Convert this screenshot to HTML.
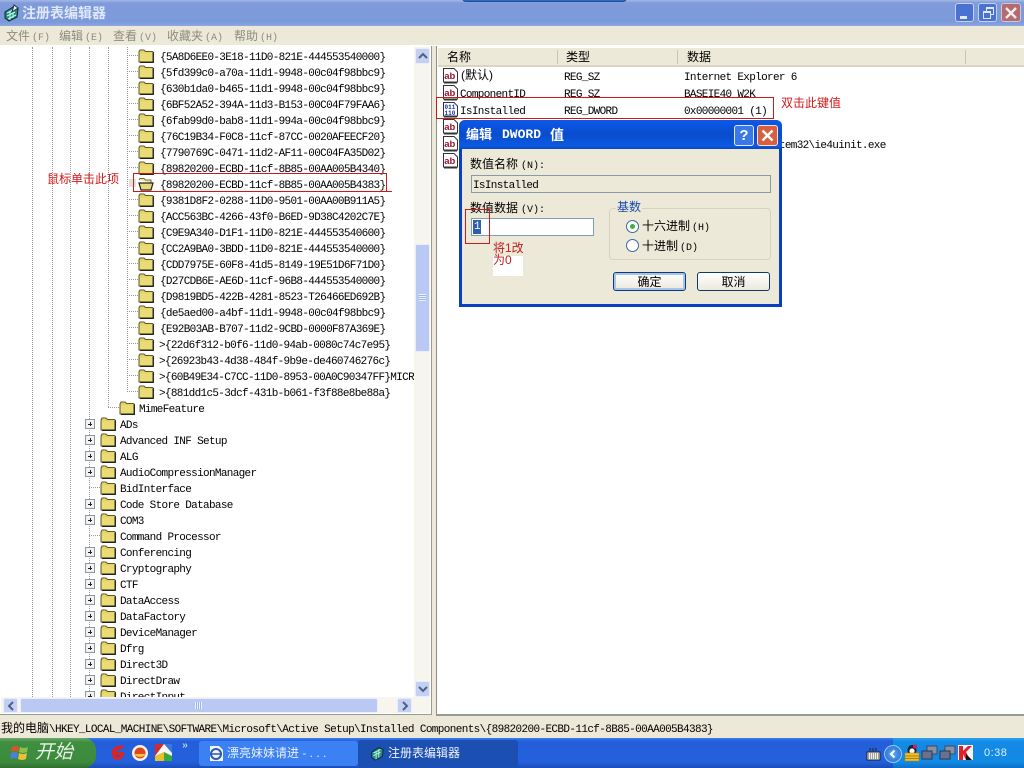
<!DOCTYPE html>
<html><head><meta charset="utf-8"><style>
html,body{margin:0;padding:0;background:#ece9d8}
#r{position:relative;width:1024px;height:768px;overflow:hidden;background:#ece9d8;font:11px "Liberation Mono","WenQuanYi Zen Hei",monospace;color:#000}
.a{position:absolute}
.t{position:absolute;white-space:pre;line-height:16px;height:16px;letter-spacing:-.67px;margin-top:2px}
.c{font-family:"Liberation Sans","WenQuanYi Zen Hei","Noto Sans CJK SC",sans-serif;font-size:12px;letter-spacing:0;white-space:pre;position:absolute;line-height:16px}
.s{font:10px "Liberation Mono",monospace;margin-left:2px}
.m{color:#8d8b80;margin-top:1px}
.red{color:#d01818}
svg{position:absolute;overflow:visible}
.v{position:absolute;width:0;border-left:1px dotted #999}
.h{position:absolute;height:0;border-top:1px dotted #999}
.p{position:absolute;left:85px;width:8px;height:8px;border:1px solid #8a9aa8;background:#f4f4ee}
.p:before{content:"";position:absolute;left:2px;top:3.5px;width:4px;height:1px;background:#222}
.p:after{content:"";position:absolute;left:3.5px;top:2px;width:1px;height:4px;background:#222}
</style></head><body><div id="r">
<svg width="0" height="0" style="position:absolute"><defs>
<symbol id="f" viewBox="0 0 16 14"><path d="M1 3 L2 1 H6 L7.5 2.5 H14.5 L15.5 3.5 V13 H1 Z" fill="#e2d568" stroke="#5c5a30" stroke-width="1"/><path d="M2 4.5 H14.5 V12 H2 Z" fill="#e9dc74"/><path d="M15.2 3.5 V13.3 H2" stroke="#222" fill="none" stroke-width="1.3"/></symbol>
<symbol id="ab" viewBox="0 0 16 18"><path d="M1.5 .5 H12 L15.5 4 V14 H1.5 Z" fill="#fff" stroke="#333"/><path d="M2 15 H15" stroke="#333"/><text x="2.2" y="11" font-family="Liberation Sans" font-weight="700" font-size="9.5" fill="#a01030">ab</text></symbol>
<symbol id="bin" viewBox="0 0 16 18"><path d="M1.5 .5 H12 L15.5 4 V14 H1.5 Z" fill="#fff" stroke="#333"/><path d="M2 15 H15" stroke="#333"/><text x="2.5" y="7" font-family="Liberation Mono" font-weight="700" font-size="6" fill="#1030b0">011</text><text x="2.5" y="13" font-family="Liberation Mono" font-weight="700" font-size="6" fill="#1030b0">110</text></symbol>
</defs></svg>

<!-- title bar -->
<div class="a" style="left:0;top:0;width:1024px;height:26px;background:linear-gradient(#a5b8e6 0,#7f9bdb 3px,#7c99da 22px,#8ea8e2 26px)"></div>
<div class="a" style="left:462px;top:-8px;width:163px;height:8px;background:#2f6cc0;border-radius:4px;border:1px solid #1b4f9a"></div>
<svg style="left:2px;top:4px" width="18" height="18" viewBox="0 0 18 18"><path d="M3 8 L11 3 L16 5 L15 13 L7 17 L3 14 Z" fill="#2a8a7a" stroke="#123" stroke-width="1"/><path d="M5 9 L13 5 M5 12 L13 8 M6 15 L14 11 M8 7 V16 M11 5 V14" stroke="#bfe" stroke-width="1"/><path d="M12 1 L16 4 L10 8 Z" fill="#e8f0ff" stroke="#234"/></svg>
<div class="c" style="left:22px;top:4px;color:#dfe8f8;font-weight:700;font-size:14px;line-height:18px">注册表编辑器</div>
<div class="a" style="left:955px;top:3px;width:19px;height:19px;background:#4a72d0;border:1px solid #c4d2ee;border-radius:3px;box-sizing:border-box"><div class="a" style="left:4px;top:12px;width:7px;height:3px;background:#dfe8f8"></div></div>
<div class="a" style="left:978px;top:3px;width:19px;height:19px;background:#4a72d0;border:1px solid #c4d2ee;border-radius:3px;box-sizing:border-box"><div class="a" style="left:7px;top:3px;width:6px;height:5px;border:1px solid #dfe8f8;border-top-width:2px"></div><div class="a" style="left:4px;top:7px;width:6px;height:5px;border:1px solid #dfe8f8;border-top-width:2px;background:#4a72d0"></div></div>
<div class="a" style="left:1001px;top:3px;width:20px;height:19px;background:#b56a72;border:1px solid #d8c4cc;border-radius:3px;box-sizing:border-box"><svg style="left:3px;top:3px" width="12" height="12"><path d="M1 1 L11 11 M11 1 L1 11" stroke="#f4eeee" stroke-width="2.4"/></svg></div>

<!-- menu -->
<div class="c m" style="left:6px;top:27px">文件<span class="s">(F)</span></div>
<div class="c m" style="left:59px;top:27px">编辑<span class="s">(E)</span></div>
<div class="c m" style="left:113px;top:27px">查看<span class="s">(V)</span></div>
<div class="c m" style="left:167px;top:27px">收藏夹<span class="s">(A)</span></div>
<div class="c m" style="left:234px;top:27px">帮助<span class="s">(H)</span></div>
<div class="a" style="left:0;top:45px;width:1024px;height:1px;background:#fff"></div>

<!-- tree panel -->
<div class="a" style="left:0;top:46px;width:432px;height:669px;background:#fff;border-right:1px solid #9a9a90;border-bottom:1px solid #9a9a90;box-sizing:border-box"></div>
<div class="a" id="tree" style="left:0;top:47px;width:414px;height:650px;overflow:hidden">
<div style="position:absolute;left:0;top:-47px;width:414px;height:770px">
<div class="v" style="left:32px;top:47px;height:650px"></div>
<div class="v" style="left:52px;top:47px;height:650px"></div>
<div class="v" style="left:70px;top:47px;height:650px"></div>
<div class="v" style="left:89px;top:47px;height:650px"></div>
<div class="v" style="left:108px;top:47px;height:360px"></div>
<div class="v" style="left:127px;top:47px;height:345px"></div>
<div class="h" style="left:127px;top:55px;width:11px"></div><div class="h" style="left:127px;top:71px;width:11px"></div><div class="h" style="left:127px;top:87px;width:11px"></div><div class="h" style="left:127px;top:103px;width:11px"></div><div class="h" style="left:127px;top:119px;width:11px"></div><div class="h" style="left:127px;top:135px;width:11px"></div><div class="h" style="left:127px;top:151px;width:11px"></div><div class="h" style="left:127px;top:167px;width:11px"></div><div class="h" style="left:127px;top:199px;width:11px"></div><div class="h" style="left:127px;top:215px;width:11px"></div><div class="h" style="left:127px;top:231px;width:11px"></div><div class="h" style="left:127px;top:247px;width:11px"></div><div class="h" style="left:127px;top:263px;width:11px"></div><div class="h" style="left:127px;top:279px;width:11px"></div><div class="h" style="left:127px;top:295px;width:11px"></div><div class="h" style="left:127px;top:311px;width:11px"></div><div class="h" style="left:127px;top:327px;width:11px"></div><div class="h" style="left:127px;top:343px;width:11px"></div><div class="h" style="left:127px;top:359px;width:11px"></div><div class="h" style="left:127px;top:375px;width:11px"></div><div class="h" style="left:127px;top:391px;width:11px"></div>
<div class="h" style="left:108px;top:407px;width:11px"></div>
<div class="h" style="left:89px;top:487px;width:11px"></div><div class="h" style="left:89px;top:535px;width:11px"></div>
<div class="a" style="left:129px;top:179px;width:7px;height:8px;background:#e2e2da"></div>

<svg style="left:138px;top:49px" width="16" height="14"><use href="#f"/></svg><svg style="left:138px;top:65px" width="16" height="14"><use href="#f"/></svg><svg style="left:138px;top:81px" width="16" height="14"><use href="#f"/></svg><svg style="left:138px;top:97px" width="16" height="14"><use href="#f"/></svg><svg style="left:138px;top:113px" width="16" height="14"><use href="#f"/></svg><svg style="left:138px;top:129px" width="16" height="14"><use href="#f"/></svg><svg style="left:138px;top:145px" width="16" height="14"><use href="#f"/></svg><svg style="left:138px;top:161px" width="16" height="14"><use href="#f"/></svg>
<svg style="left:138px;top:177px" width="16" height="14" viewBox="0 0 16 14"><path d="M1 3 L2 1.5 H6 L7.5 3 H13 V6" fill="#efe6a0" stroke="#6d6a3a"/><path d="M1 6 H15 L13 13 H3 Z" fill="#e6d97a" stroke="#222" stroke-width="1.2"/></svg>
<svg style="left:138px;top:193px" width="16" height="14"><use href="#f"/></svg><svg style="left:138px;top:209px" width="16" height="14"><use href="#f"/></svg><svg style="left:138px;top:225px" width="16" height="14"><use href="#f"/></svg><svg style="left:138px;top:241px" width="16" height="14"><use href="#f"/></svg><svg style="left:138px;top:257px" width="16" height="14"><use href="#f"/></svg><svg style="left:138px;top:273px" width="16" height="14"><use href="#f"/></svg><svg style="left:138px;top:289px" width="16" height="14"><use href="#f"/></svg><svg style="left:138px;top:305px" width="16" height="14"><use href="#f"/></svg><svg style="left:138px;top:321px" width="16" height="14"><use href="#f"/></svg><svg style="left:138px;top:337px" width="16" height="14"><use href="#f"/></svg><svg style="left:138px;top:353px" width="16" height="14"><use href="#f"/></svg><svg style="left:138px;top:369px" width="16" height="14"><use href="#f"/></svg><svg style="left:138px;top:385px" width="16" height="14"><use href="#f"/></svg>
<svg style="left:119px;top:401px" width="16" height="14"><use href="#f"/></svg>

<div class="t" style="left:160px;top:48px">{5A8D6EE0-3E18-11D0-821E-444553540000}</div>
<div class="t" style="left:160px;top:64px">{5fd399c0-a70a-11d1-9948-00c04f98bbc9}</div>
<div class="t" style="left:160px;top:80px">{630b1da0-b465-11d1-9948-00c04f98bbc9}</div>
<div class="t" style="left:160px;top:96px">{6BF52A52-394A-11d3-B153-00C04F79FAA6}</div>
<div class="t" style="left:160px;top:112px">{6fab99d0-bab8-11d1-994a-00c04f98bbc9}</div>
<div class="t" style="left:160px;top:128px">{76C19B34-F0C8-11cf-87CC-0020AFEECF20}</div>
<div class="t" style="left:160px;top:144px">{7790769C-0471-11d2-AF11-00C04FA35D02}</div>
<div class="t" style="left:160px;top:160px">{89820200-ECBD-11cf-8B85-00AA005B4340}</div>
<div class="t" style="left:160px;top:176px">{89820200-ECBD-11cf-8B85-00AA005B4383}</div>
<div class="t" style="left:160px;top:192px">{9381D8F2-0288-11D0-9501-00AA00B911A5}</div>
<div class="t" style="left:160px;top:208px">{ACC563BC-4266-43f0-B6ED-9D38C4202C7E}</div>
<div class="t" style="left:160px;top:224px">{C9E9A340-D1F1-11D0-821E-444553540600}</div>
<div class="t" style="left:160px;top:240px">{CC2A9BA0-3BDD-11D0-821E-444553540000}</div>
<div class="t" style="left:160px;top:256px">{CDD7975E-60F8-41d5-8149-19E51D6F71D0}</div>
<div class="t" style="left:160px;top:272px">{D27CDB6E-AE6D-11cf-96B8-444553540000}</div>
<div class="t" style="left:160px;top:288px">{D9819BD5-422B-4281-8523-T26466ED692B}</div>
<div class="t" style="left:160px;top:304px">{de5aed00-a4bf-11d1-9948-00c04f98bbc9}</div>
<div class="t" style="left:160px;top:320px">{E92B03AB-B707-11d2-9CBD-0000F87A369E}</div>
<div class="t" style="left:159px;top:336px">&gt;{22d6f312-b0f6-11d0-94ab-0080c74c7e95}</div>
<div class="t" style="left:159px;top:352px">&gt;{26923b43-4d38-484f-9b9e-de460746276c}</div>
<div class="t" style="left:159px;top:368px">&gt;{60B49E34-C7CC-11D0-8953-00A0C90347FF}MICRO</div>
<div class="t" style="left:159px;top:384px">&gt;{881dd1c5-3dcf-431b-b061-f3f88e8be88a}</div>
<div class="t" style="left:139px;top:400px">MimeFeature</div>

<div class="p" style="top:419px"></div><svg style="left:100px;top:417px" width="16" height="14"><use href="#f"/></svg><div class="t" style="left:120px;top:416px">ADs</div>
<div class="p" style="top:435px"></div><svg style="left:100px;top:433px" width="16" height="14"><use href="#f"/></svg><div class="t" style="left:120px;top:432px">Advanced INF Setup</div>
<div class="p" style="top:451px"></div><svg style="left:100px;top:449px" width="16" height="14"><use href="#f"/></svg><div class="t" style="left:120px;top:448px">ALG</div>
<div class="p" style="top:467px"></div><svg style="left:100px;top:465px" width="16" height="14"><use href="#f"/></svg><div class="t" style="left:120px;top:464px">AudioCompressionManager</div>
<svg style="left:100px;top:481px" width="16" height="14"><use href="#f"/></svg><div class="t" style="left:120px;top:480px">BidInterface</div>
<div class="p" style="top:499px"></div><svg style="left:100px;top:497px" width="16" height="14"><use href="#f"/></svg><div class="t" style="left:120px;top:496px">Code Store Database</div>
<div class="p" style="top:515px"></div><svg style="left:100px;top:513px" width="16" height="14"><use href="#f"/></svg><div class="t" style="left:120px;top:512px">COM3</div>
<svg style="left:100px;top:529px" width="16" height="14"><use href="#f"/></svg><div class="t" style="left:120px;top:528px">Command Processor</div>
<div class="p" style="top:547px"></div><svg style="left:100px;top:545px" width="16" height="14"><use href="#f"/></svg><div class="t" style="left:120px;top:544px">Conferencing</div>
<div class="p" style="top:563px"></div><svg style="left:100px;top:561px" width="16" height="14"><use href="#f"/></svg><div class="t" style="left:120px;top:560px">Cryptography</div>
<div class="p" style="top:579px"></div><svg style="left:100px;top:577px" width="16" height="14"><use href="#f"/></svg><div class="t" style="left:120px;top:576px">CTF</div>
<div class="p" style="top:595px"></div><svg style="left:100px;top:593px" width="16" height="14"><use href="#f"/></svg><div class="t" style="left:120px;top:592px">DataAccess</div>
<div class="p" style="top:611px"></div><svg style="left:100px;top:609px" width="16" height="14"><use href="#f"/></svg><div class="t" style="left:120px;top:608px">DataFactory</div>
<div class="p" style="top:627px"></div><svg style="left:100px;top:625px" width="16" height="14"><use href="#f"/></svg><div class="t" style="left:120px;top:624px">DeviceManager</div>
<div class="p" style="top:643px"></div><svg style="left:100px;top:641px" width="16" height="14"><use href="#f"/></svg><div class="t" style="left:120px;top:640px">Dfrg</div>
<div class="p" style="top:659px"></div><svg style="left:100px;top:657px" width="16" height="14"><use href="#f"/></svg><div class="t" style="left:120px;top:656px">Direct3D</div>
<div class="p" style="top:675px"></div><svg style="left:100px;top:673px" width="16" height="14"><use href="#f"/></svg><div class="t" style="left:120px;top:672px">DirectDraw</div>
<div class="p" style="top:691px"></div><svg style="left:100px;top:689px" width="16" height="14"><use href="#f"/></svg><div class="t" style="left:120px;top:688px">DirectInput</div>
</div></div>

<!-- vertical scrollbar -->
<div class="a" style="left:414px;top:47px;width:16px;height:666px;background:#f6f5ee"></div>
<div class="a" style="left:415px;top:48px;width:15px;height:16px;background:#c3d0f4;border:1px solid #e8eefc;box-sizing:border-box;border-radius:2px"><svg style="left:2px;top:3px" width="10" height="8"><path d="M1 6 L5 2 L9 6" fill="none" stroke="#4d6185" stroke-width="2"/></svg></div>
<div class="a" style="left:415px;top:244px;width:15px;height:108px;background:#b9c9f3;border:1px solid #e8eefc;box-sizing:border-box;border-radius:2px"><div class="a" style="left:3px;top:49px;width:7px;height:7px;background:repeating-linear-gradient(#eef2fc 0 1px,#9fb2e4 1px 2px)"></div></div>
<div class="a" style="left:415px;top:681px;width:15px;height:16px;background:#c3d0f4;border:1px solid #e8eefc;box-sizing:border-box;border-radius:2px"><svg style="left:2px;top:3px" width="10" height="8"><path d="M1 2 L5 6 L9 2" fill="none" stroke="#4d6185" stroke-width="2"/></svg></div>
<!-- horizontal scrollbar -->
<div class="a" style="left:1px;top:697px;width:413px;height:16px;background:#f6f5ee"></div>
<div class="a" style="left:3px;top:698px;width:15px;height:15px;background:#c3d0f4;border:1px solid #e8eefc;box-sizing:border-box;border-radius:2px"><svg style="left:3px;top:2px" width="8" height="10"><path d="M6 1 L2 5 L6 9" fill="none" stroke="#4d6185" stroke-width="2"/></svg></div>
<div class="a" style="left:20px;top:698px;width:358px;height:15px;background:#b9c9f3;border:1px solid #e8eefc;box-sizing:border-box;border-radius:2px"><div class="a" style="left:174px;top:3px;width:7px;height:7px;background:repeating-linear-gradient(90deg,#eef2fc 0 1px,#9fb2e4 1px 2px)"></div></div>
<div class="a" style="left:397px;top:698px;width:15px;height:15px;background:#c3d0f4;border:1px solid #e8eefc;box-sizing:border-box;border-radius:2px"><svg style="left:3px;top:2px" width="8" height="10"><path d="M2 1 L6 5 L2 9" fill="none" stroke="#4d6185" stroke-width="2"/></svg></div>

<!-- right panel -->
<div class="a" style="left:436px;top:46px;width:588px;height:670px;background:#fff;border-left:1px solid #8e8e84;border-bottom:2px solid #9a9a90;box-sizing:border-box"></div>
<div class="a" style="left:438px;top:48px;width:586px;height:19px;background:#ece9d8;border-bottom:2px solid #d9d5c2;box-sizing:border-box"></div>
<div class="a" style="left:557px;top:50px;width:1px;height:14px;background:#c8c4b2"></div>
<div class="a" style="left:677px;top:50px;width:1px;height:14px;background:#c8c4b2"></div>
<div class="a" style="left:965px;top:50px;width:1px;height:14px;background:#c8c4b2"></div>
<div class="c" style="left:447px;top:49px">名称</div><div class="c" style="left:566px;top:49px">类型</div><div class="c" style="left:687px;top:49px">数据</div>
<svg style="left:442px;top:68px" width="16" height="18"><use href="#ab"/></svg>
<svg style="left:442px;top:85px" width="16" height="18"><use href="#ab"/></svg>
<svg style="left:442px;top:102px" width="16" height="18"><use href="#bin"/></svg>
<svg style="left:442px;top:119px" width="16" height="18"><use href="#ab"/></svg>
<svg style="left:442px;top:136px" width="16" height="18"><use href="#ab"/></svg>
<svg style="left:442px;top:153px" width="16" height="18"><use href="#ab"/></svg>
<div class="c" style="left:461px;top:67px">(默认)</div>
<div class="t" style="left:460px;top:85px">ComponentID</div>
<div class="t" style="left:460px;top:102px">IsInstalled</div>
<div class="t" style="left:564px;top:68px">REG_SZ</div><div class="t" style="left:564px;top:85px">REG_SZ</div><div class="t" style="left:564px;top:102px">REG_DWORD</div>
<div class="t" style="left:684px;top:68px">Internet Explorer 6</div>
<div class="t" style="left:684px;top:85px">BASEIE40_W2K</div>
<div class="t" style="left:684px;top:102px">0x00000001 (1)</div>
<div class="t" style="left:684px;top:136px">%SystemRoot%\system32\ie4uinit.exe</div>

<!-- status -->
<div class="c" style="left:1px;top:720px">我的电脑<span style="font:11px 'Liberation Mono';letter-spacing:-.62px">\HKEY_LOCAL_MACHINE\SOFTWARE\Microsoft\Active Setup\Installed Components\{89820200-ECBD-11cf-8B85-00AA005B4383}</span></div>

<!-- annotations -->
<div class="a" style="left:133px;top:173px;width:254px;height:19px;border:1px solid #cc1a1a;box-sizing:border-box"></div>
<div class="a" style="left:133px;top:191px;width:64px;height:1px;background:#cc1a1a"></div>
<div class="a" style="left:327px;top:191px;width:65px;height:1px;background:#cc1a1a"></div>
<div class="c red" style="left:47px;top:171px">鼠标单击此项</div>
<div class="a" style="left:436px;top:97px;width:338px;height:22px;border:1px solid #cc1a1a;box-sizing:border-box"></div>
<div class="c red" style="left:781px;top:95px">双击此键值</div>

<!-- dialog -->
<div class="a" style="left:459px;top:120px;width:323px;height:187px;background:#0a3fc4;border-radius:6px 6px 0 0"></div>
<div class="a" style="left:459px;top:120px;width:323px;height:29px;background:linear-gradient(#0d5ade 0,#0a55e4 4px,#0a4ccc 14px,#0b5ae4 26px,#0a48c0 29px);border-radius:6px 6px 0 0"></div>
<div class="a" style="left:462px;top:149px;width:317px;height:155px;background:#ece9d8"></div>
<div class="c" style="left:466px;top:127px;color:#fff;font-weight:700;font-size:13px">编辑</div>
<div class="c" style="left:502px;top:127px;color:#fff;font:700 13px/16px 'Liberation Mono'">DWORD</div>
<div class="c" style="left:550px;top:127px;color:#fff;font-weight:700;font-size:14px">值</div>
<div class="a" style="left:734px;top:125px;width:20px;height:21px;background:#3a78e8;border:1px solid #dfe8fa;border-radius:3px;box-sizing:border-box;color:#fff;font:700 15px/19px 'Liberation Sans';text-align:center">?</div>
<div class="a" style="left:757px;top:125px;width:21px;height:21px;background:#d9603f;border:1px solid #f3e2da;border-radius:3px;box-sizing:border-box"><svg style="left:3px;top:3px" width="13" height="13"><path d="M1.5 1.5 L11.5 11.5 M11.5 1.5 L1.5 11.5" stroke="#fff" stroke-width="2.4"/></svg></div>
<div class="c" style="left:470px;top:156px">数值名称<span class="s" style="margin-left:3px">(N):</span></div>
<div class="a" style="left:471px;top:175px;width:300px;height:18px;background:#ece9d8;border:1px solid #8a9aa8;box-sizing:border-box"></div>
<div class="t" style="left:473px;top:176px">IsInstalled</div>
<div class="c" style="left:470px;top:200px">数值数据<span class="s" style="margin-left:3px">(V):</span></div>
<div class="a" style="left:471px;top:218px;width:123px;height:18px;background:#fff;border:1px solid #7f9db9;box-sizing:border-box"></div>
<div class="a" style="left:473px;top:220px;width:8px;height:14px;background:#2f5fa8"></div>
<div class="t" style="left:474px;top:217px;color:#fff">1</div>
<div class="a" style="left:465px;top:209px;width:25px;height:35px;border:1px solid #cc1a1a;box-sizing:border-box"></div>
<div class="a" style="left:493px;top:256px;width:30px;height:20px;background:#fff"></div>
<div class="c" style="left:493px;top:240px;color:#c02020">将1改</div>
<div class="c" style="left:493px;top:252px;color:#c02020">为0</div>
<div class="a" style="left:609px;top:208px;width:162px;height:52px;border:1px solid #d6d2c0;border-radius:4px;box-sizing:border-box"></div>
<div class="c" style="left:616px;top:199px;color:#1848b0;background:#ece9d8;padding:0 1px">基数</div>
<div class="a" style="left:626px;top:220px;width:13px;height:13px;border-radius:50%;background:#fff;border:1px solid #3a6a98;box-sizing:border-box"><div class="a" style="left:3px;top:3px;width:5px;height:5px;border-radius:50%;background:#3fae4a"></div></div>
<div class="a" style="left:626px;top:239px;width:13px;height:13px;border-radius:50%;background:#fff;border:1px solid #3a6a98;box-sizing:border-box"></div>
<div class="c" style="left:642px;top:218px">十六进制<span class="s">(H)</span></div>
<div class="c" style="left:642px;top:238px">十进制<span class="s">(D)</span></div>
<div class="a" style="left:613px;top:272px;width:73px;height:19px;border:1px solid #0f3a6e;border-radius:3px;box-sizing:border-box;background:linear-gradient(#fff,#ece9dc);box-shadow:inset 0 0 0 2px #a9c4ec;font:12px/17px 'WenQuanYi Zen Hei','Noto Sans CJK SC',sans-serif;text-align:center">确定</div>
<div class="a" style="left:697px;top:272px;width:73px;height:19px;border:1px solid #0f3a6e;border-radius:3px;box-sizing:border-box;background:linear-gradient(#fff,#ece9dc);font:12px/17px 'WenQuanYi Zen Hei','Noto Sans CJK SC',sans-serif;text-align:center">取消</div>

<!-- taskbar -->
<div class="a" style="left:0;top:738px;width:1024px;height:30px;background:linear-gradient(#3a80ea 0,#245edb 3px,#2460dc 24px,#1a4cb8 30px)"></div>
<div class="a" style="left:0;top:738px;width:96px;height:30px;background:linear-gradient(#6ea86e 0,#3f8f3f 4px,#3d8a3d 24px,#2f6e2f 30px);border-radius:0 12px 12px 0"></div>
<svg style="left:10px;top:744px" width="20" height="18" viewBox="0 0 20 18"><path d="M2 3 Q6 1 9 3 L8 8 Q5 6 1 8 Z" fill="#d9542b"/><path d="M10 3 Q14 5 18 3 L17 8 Q13 10 9 8 Z" fill="#8cc04a"/><path d="M1 9 Q5 7 8 9 L7 15 Q4 13 0 15 Z" fill="#4a80d8"/><path d="M9 9 Q13 11 17 9 L16 15 Q12 17 8 15 Z" fill="#e8c03a"/></svg>
<div class="c" style="left:35px;top:741px;color:#e8f0e8;font-style:italic;font-size:19px;line-height:24px">开始</div>
<svg style="left:109px;top:744px" width="18" height="18" viewBox="0 0 18 18"><path d="M3 9 Q3 3 9 2 L15 1 L13 5 Q8 5 7.5 8 H15 Q15 16 7 16 Q3 15 3 9 Z" fill="#dd2222"/><path d="M7 11 H11 Q10 13 8 13 Z" fill="#1a55c8"/></svg>
<svg style="left:131px;top:744px" width="18" height="18" viewBox="0 0 18 18"><circle cx="9" cy="9" r="8" fill="#f6f0e8"/><circle cx="9" cy="9" r="5.5" fill="#d84a1a"/><path d="M4 10 H14 V11 Q9 15 4 11 Z" fill="#f4c040"/></svg>
<svg style="left:155px;top:744px" width="17" height="17" viewBox="0 0 17 17"><rect width="17" height="17" fill="#f8f8f8"/><path d="M0 0 H9 L0 12Z" fill="#d02a2a"/><path d="M9 0 H17 V9 Z" fill="#3a78d8"/><path d="M0 12 L9 8 L9 17 H0Z" fill="#e8c030"/><path d="M9 8 L17 12 V17 H9Z" fill="#3aa83a"/></svg>
<div class="a" style="left:182px;top:741px;color:#b9d0f4;font:700 10px 'Liberation Mono'">»</div>
<div class="a" style="left:199px;top:741px;width:159px;height:25px;background:#3c81f3;border-radius:3px"></div>
<svg style="left:208px;top:745px" width="17" height="17" viewBox="0 0 17 17"><path d="M2 1 H11 L15 5 V16 H2 Z" fill="#f4f4f4"/><circle cx="8" cy="9" r="5" fill="none" stroke="#2a5ab8" stroke-width="2"/><path d="M4 9 H12" stroke="#2a5ab8" stroke-width="1.5"/></svg>
<div class="c" style="left:227px;top:745px;color:#e8effc">漂亮妹妹请进 - . . .</div>
<div class="a" style="left:358px;top:740px;width:160px;height:27px;background:#1c4fb2;border-radius:3px"></div>
<svg style="left:369px;top:745px" width="16" height="16" viewBox="0 0 18 18"><path d="M3 8 L11 3 L16 5 L15 13 L7 17 L3 14 Z" fill="#2a8a7a" stroke="#123"/><path d="M5 9 L13 5 M5 12 L13 8 M8 7 V16 M11 5 V14" stroke="#bfe"/></svg>
<div class="c" style="left:388px;top:745px;color:#f0f4fc">注册表编辑器</div>
<div class="a" style="left:893px;top:738px;width:131px;height:30px;background:linear-gradient(#2aa0ee 0,#128ae6 4px,#118ae4 24px,#0c6fc8 30px)"></div>
<svg style="left:866px;top:748px" width="15" height="13" viewBox="0 0 15 13"><rect x="1" y="4" width="13" height="8" fill="#f0f0f0" stroke="#222"/><path d="M2 6 H13 M2 8 H13 M2 10 H13" stroke="#555" stroke-dasharray="1 1"/><path d="M4 0 V3 M7 0 V3 M10 0 V3" stroke="#222"/></svg>
<div class="a" style="left:884px;top:745px;width:18px;height:18px;border-radius:50%;background:radial-gradient(#58a8f0,#1f66d0);border:1px solid #9cc8f4;box-sizing:border-box"><svg style="left:3px;top:3px" width="10" height="10"><path d="M6.5 1.5 L3 5 L6.5 8.5" fill="none" stroke="#fff" stroke-width="2.2"/></svg></div>
<svg style="left:904px;top:744px" width="16" height="18" viewBox="0 0 16 18"><ellipse cx="8" cy="6" rx="4.5" ry="5" fill="#222"/><circle cx="8" cy="7" r="2.6" fill="#f8f8f8"/><rect x="1" y="9" width="14" height="8" fill="#f0c030" stroke="#b08000" stroke-width=".5"/><path d="M1 12 H15 M1 14.5 H15" stroke="#b08000"/><circle cx="11" cy="2.5" r="2" fill="#d02060"/></svg>
<svg style="left:922px;top:746px" width="15" height="15" viewBox="0 0 15 15"><rect x="5" y="0" width="10" height="8" fill="#8890a8" stroke="#404860"/><rect x="0" y="5" width="10" height="8" fill="#6a7090" stroke="#30384e"/></svg>
<svg style="left:940px;top:746px" width="15" height="15" viewBox="0 0 15 15"><rect x="5" y="0" width="10" height="8" fill="#8890a8" stroke="#404860"/><rect x="0" y="5" width="10" height="8" fill="#6a7090" stroke="#30384e"/></svg>
<svg style="left:958px;top:745px" width="15" height="15" viewBox="0 0 15 15"><rect width="15" height="15" fill="#f4f4f4"/><path d="M1 1 H5 V6 L10 1 H14 L8 7 L12 15 H8 L5 9 V15 H1 Z" fill="#e0202a"/><path d="M8 9 L14 15 H8 Z" fill="#111"/></svg>
<div class="c" style="left:984px;top:745px;color:#dff0fc;font-size:11px;letter-spacing:.5px">0:38</div>
</div></body></html>
